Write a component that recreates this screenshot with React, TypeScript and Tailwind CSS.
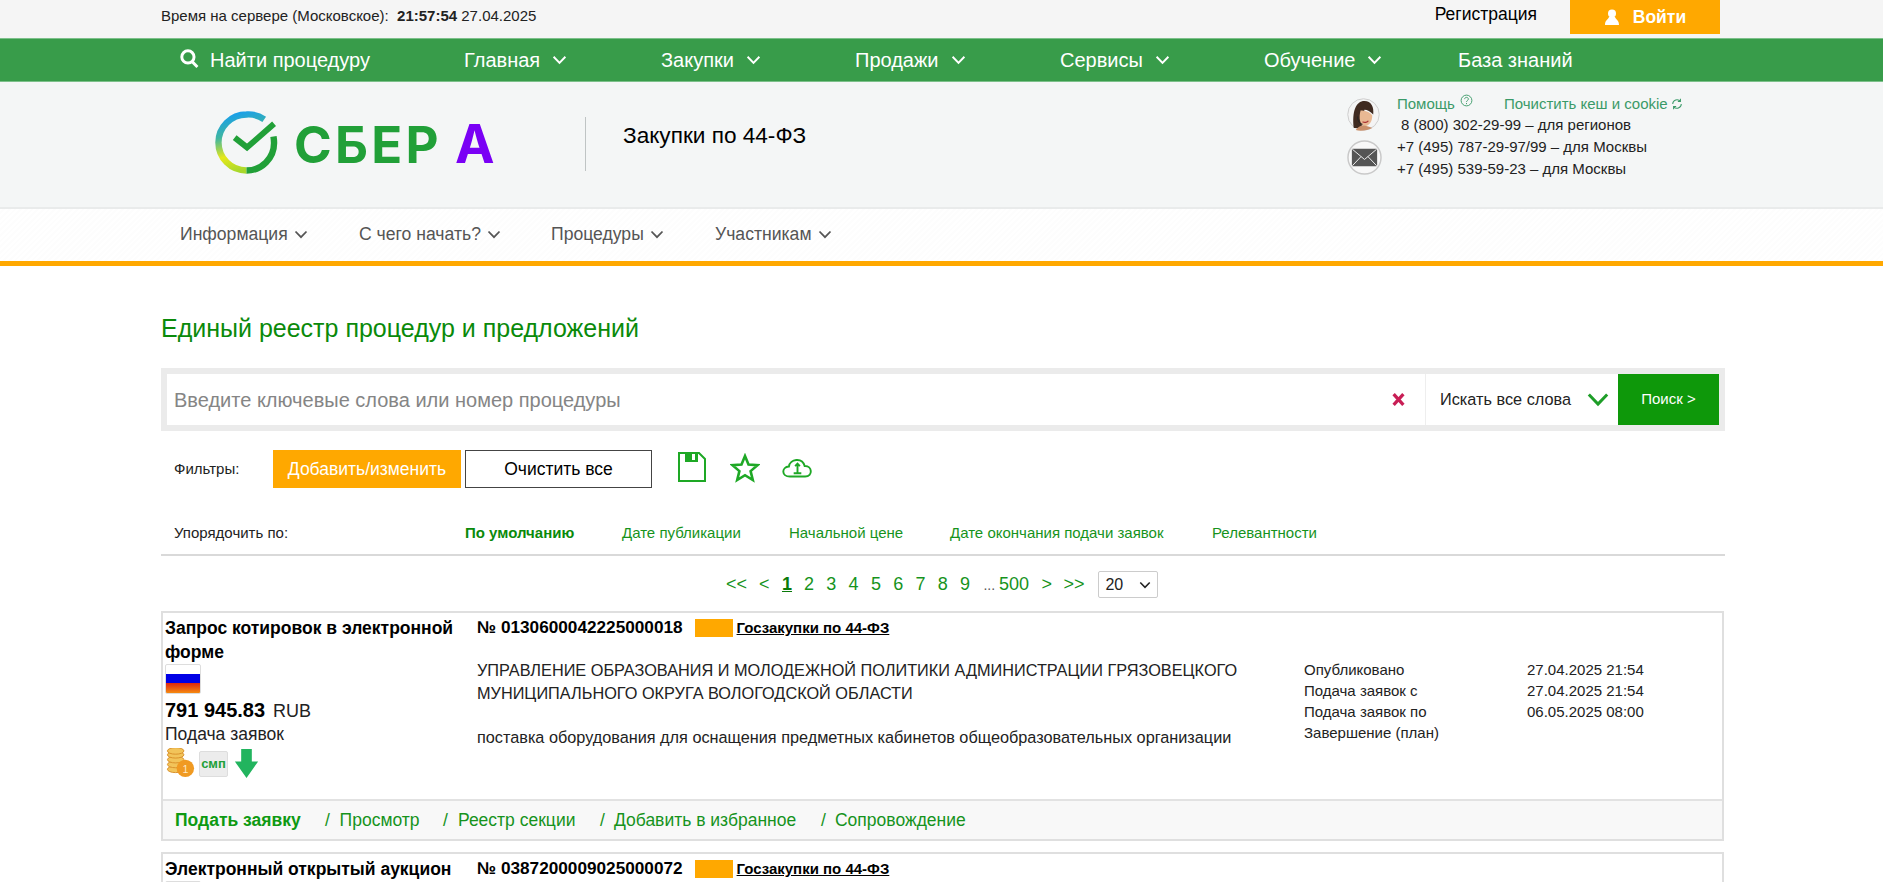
import React from "react";

const Chev = ({ cls = "" }: { cls?: string }) => (
  <svg viewBox="0 0 14 9" className={cls} fill="none" stroke="currentColor" strokeWidth="1.8">
    <path d="M1.5 1.5 7 7.2l5.5-5.7" />
  </svg>
);

const NavItem = ({ w, label, chev = true }: { w: string; label: string; chev?: boolean }) => (
  <div className={`${w} flex items-center`}>
    <span>{label}</span>
    {chev && <Chev cls="ml-[12px] w-[15px] h-[10px]" />}
  </div>
);

const SubItem = ({ w, label }: { w: string; label: string }) => (
  <div className={`${w} flex items-center`}>
    <span>{label}</span>
    <Chev cls="ml-[6px] w-[14px] h-[9px]" />
  </div>
);

const Logo = () => (
  <div className="flex items-center ml-[215px] w-[370px] h-full" style={{ fontFamily: "Inter, sans-serif" }}>
    <svg viewBox="0 0 64 64" className="w-[63px] h-[63px] shrink-0 mt-[-4px]">
      <defs>
        <linearGradient id="ring" x1="0.3" y1="0" x2="0.5" y2="1">
          <stop offset="0" stopColor="#1aa0e8" />
          <stop offset="0.35" stopColor="#3fb6a0" />
          <stop offset="0.7" stopColor="#e6e81a" />
          <stop offset="1" stopColor="#a8d82c" />
        </linearGradient>
      </defs>
      <path d="M50 8.500A28 28 0 0 0 32 3.500 28 28 0 0 0 32 60.500" fill="none" stroke="url(#ring)" strokeWidth="6.500" />
      <path d="M32 60.500A28 28 0 0 0 60 32.500c0-2-.2-4-.6-6.500" fill="none" stroke="#21a038" strokeWidth="6.500" />
      <path d="M20 27l12.500 10L60 13" fill="none" stroke="#21a038" strokeWidth="6" />
    </svg>
    <span className="ml-[16px] text-[#21a038] font-bold text-[51px] leading-none tracking-[3.300px]">СБЕР</span>
    <span className="ml-[13px] text-[#7a00f5] font-bold text-[53px] leading-none">А</span>
  </div>
);

const Avatar = () => (
  <svg viewBox="0 0 34 34" className="w-[33px] h-[33px]">
    <circle cx="17" cy="17" r="16.200" fill="#f4f4f4" stroke="#ccc" />
    <path d="M7 31C5 14 9 3 18 3c7 0 10 6 9 14-3-3-6-5-9-5-2 6-2 12-3 19z" fill="#3f2a20" />
    <path d="M14 13c4 0 9 1 12 5 0 6-3 11-8 11-5-1-6-9-4-16z" fill="#e9b893" />
    <path d="M9 33c2-3 4-4 7-5 3 1 7 1 10 3-4 2-12 4-17 2z" fill="#c98f6a" />
    <path d="M16 24.500c2 1.200 5 .8 6-1" fill="none" stroke="#a33" strokeWidth="1.200" />
    <path d="M11 19c0 4 1 7 5 8" fill="none" stroke="#222" strokeWidth="1" />
  </svg>
);

const Mail = () => (
  <svg viewBox="0 0 36 36" className="w-[35px] h-[35px]">
    <circle cx="18" cy="18" r="17" fill="#f8f8f8" stroke="#c9c9c9" strokeWidth="1.500" />
    <rect x="5" y="9" width="26" height="18" rx="1" fill="#555" />
    <path d="M5.500 9.500 18 20 30.500 9.500M5.500 26.500l9-9.500M30.500 26.500l-9-9.500" fill="none" stroke="#eee" strokeWidth="1" />
  </svg>
);

const Flag = () => (
  <div className="w-[36px] h-[30px] rounded-[2px] border border-[#ddd] bg-[linear-gradient(#ffffff_0_33%,#0000e6_33%_66%,#e02a10_66%,#f58a10_100%)]" />
);

const Coins = () => (
  <svg viewBox="0 0 32 32" className="w-[31px] h-[31px]">
    {[22, 17, 12, 7, 3].map((y) => (
      <ellipse key={y} cx="11" cy={y} rx="8.500" ry="3.400" fill="#f2c45a" stroke="#d9912a" strokeWidth="1" />
    ))}
    <circle cx="21" cy="21" r="9" fill="#f09a22" />
    <text x="21" y="25.500" textAnchor="middle" fontSize="11" fill="#ffe9c4" fontFamily="Liberation Sans, sans-serif">1</text>
  </svg>
);

const Arrow = () => (
  <svg viewBox="0 0 24 30" className="w-[25px] h-[29px]">
    <path d="M6.500 0h11v13H24L12 30 0 13h6.500z" fill="#22b45e" />
  </svg>
);

const NumRow = ({ num }: { num: string }) => (
  <div className="flex items-center h-[24px] text-black">
    <span className="font-bold text-[17.200px]">№ {num}</span>
    <span className="ml-[12px] w-[38px] h-[18px] bg-[#ffa800]" />
    <span className="ml-[4px] font-bold text-[15px] underline">Госзакупки по 44-ФЗ</span>
  </div>
);

const Dates = () => (
  <div className="text-[15px] leading-[21px] text-[#222]">
    {[
      ["Опубликовано", "27.04.2025 21:54"],
      ["Подача заявок с", "27.04.2025 21:54"],
      ["Подача заявок по", "06.05.2025 08:00"],
      ["Завершение (план)", ""],
    ].map(([a, b]) => (
      <div key={a} className="flex">
        <span className="w-[223px]">{a}</span>
        <span>{b}</span>
      </div>
    ))}
  </div>
);

export default function App() {
  return (
    <div className="w-[1883px] h-[882px] overflow-hidden bg-white" style={{ fontFamily: "'Liberation Sans', Arial, sans-serif" }}>
      {/* top bar */}
      <div className="h-[38px] bg-[#f5f5f5] flex items-start text-[#222]">
        <div className="ml-[161px] mt-[7px] text-[15px] leading-[18px]">
          Время на сервере (Московское):&nbsp; <b>21:57:54</b> 27.04.2025
        </div>
        <div className="ml-auto flex mr-[163px]">
          <span className="text-[17.500px] leading-[28px] text-black mr-[33px]">Регистрация</span>
          <div className="w-[150px] h-[34px] bg-[#ffa800] text-white flex items-center justify-center font-bold text-[17.500px]">
            <svg viewBox="0 0 16 16" className="w-[16px] h-[16px] mr-[13px]" fill="#fff">
              <circle cx="8" cy="4.500" r="4" />
              <path d="M5 8c-1 3-4 3-4 8h14c0-5-3-5-4-8z" />
            </svg>
            Войти
          </div>
        </div>
      </div>

      {/* green nav */}
      <div className="h-[44px] bg-[#389c4a] border-y border-[#7cc08a] text-white text-[20px] flex items-center pl-[180px]">
        <div className="w-[284px] flex items-center">
          <svg viewBox="0 0 18 18" className="w-[19px] h-[19px] mr-[11px] mt-[-4px]" fill="none" stroke="#fff" strokeWidth="2.800">
            <circle cx="7.500" cy="7.500" r="5.800" />
            <path d="M11.500 12 16.500 17" />
          </svg>
          Найти процедуру
        </div>
        <NavItem w="w-[197px]" label="Главная" />
        <NavItem w="w-[194px]" label="Закупки" />
        <NavItem w="w-[205px]" label="Продажи" />
        <NavItem w="w-[204px]" label="Сервисы" />
        <NavItem w="w-[194px]" label="Обучение" />
        <NavItem w="w-[120px]" label="База знаний" chev={false} />
      </div>

      {/* header */}
      <div className="h-[127px] bg-[#f4f6f6] flex items-center border-b-2 border-[#e9ebeb]">
        <Logo />
        <div className="w-px h-[54px] bg-[#bfc4c4] mt-[-2px]" />
        <div className="ml-[37px] text-[22.600px] text-black mt-[-18px]">Закупки по 44-ФЗ</div>
        <div className="ml-auto mr-[166px] flex self-start pt-[16px]">
          <div className="flex flex-col gap-[9px] mr-[15px] shrink-0">
            <Avatar />
            <Mail />
          </div>
          <div className="text-[15px] leading-[21px] text-[#222] w-[320px] mt-[-5px]">
            <div className="flex text-[#3a9a68]">
              <span>Помощь</span>
              <svg viewBox="0 0 14 14" className="w-[13px] h-[13px] ml-[5px] mt-[1px]" fill="none" stroke="currentColor">
                <circle cx="7" cy="7" r="5.800" />
                <path d="M5 5.500c0-2.500 4-2.500 4 0 0 1.500-2 1.500-2 3M7 9.700v1.200" />
              </svg>
              <span className="ml-[31px]">Почистить кеш и cookie</span>
              <svg viewBox="0 0 14 14" className="w-[12px] h-[12px] ml-[3px] mt-[5px]" fill="none" stroke="currentColor" strokeWidth="1.200">
                <path d="M2 7a5 5 0 0 1 9-3M12 7a5 5 0 0 1-9 3M11 1v3H8M3 13v-3h3" />
              </svg>
            </div>
            <div className="pl-[4px]">8 (800) 302-29-99 – для регионов</div>
            <div className="mt-[1px] leading-[22px]">+7 (495) 787-29-97/99 – для Москвы</div>
            <div className="leading-[22px]">+7 (495) 539-59-23 – для Москвы</div>
          </div>
        </div>
      </div>

      {/* sub nav */}
      <div className="h-[52px] bg-[repeating-linear-gradient(135deg,#ffffff_0,#ffffff_2px,#fdfdfd_2px,#fdfdfd_4px)] flex items-center pl-[180px] pb-[1px] text-[17.600px] text-[#555]">
        <SubItem w="w-[179px]" label="Информация" />
        <SubItem w="w-[192px]" label="С чего начать?" />
        <SubItem w="w-[164px]" label="Процедуры" />
        <SubItem w="w-[140px]" label="Участникам" />
      </div>
      <div className="h-[5px] bg-[#ffa800]" />

      {/* content */}
      <div className="ml-[161px] w-[1564px]">
        <h1 className="mt-[47px] text-[25px] leading-[30px] text-[#0a8a0a]">Единый реестр процедур и предложений</h1>

        {/* search */}
        <div className="mt-[25px] h-[63px] bg-[#ebebeb] p-[6px] flex">
          <div className="flex-1 bg-white flex items-center">
            <span className="ml-[7px] text-[20px] text-[#858585]">Введите ключевые слова или номер процедуры</span>
            <span className="ml-auto mr-[20px] leading-none">
              <svg viewBox="0 0 12 12" className="w-[13px] h-[13px]" fill="none" stroke="#c81e55" strokeWidth="3">
                <path d="M1.500 1 10.500 11M10.500 1 1.500 11" />
              </svg>
            </span>
            <div className="w-[193px] h-full border-l border-[#eee] flex items-center pl-[14px] text-[16.300px] text-[#222]">
              Искать все слова
              <Chev cls="ml-[15px] w-[24px] h-[15px] text-[#1e9e28]" />
            </div>
          </div>
          <div className="w-[101px] h-[51px] bg-[#0e980a] text-white text-[15px] flex items-center justify-center">Поиск &gt;</div>
        </div>

        {/* filters */}
        <div className="mt-[19px] h-[38px] flex items-center">
          <span className="ml-[13px] w-[99px] text-[15px] text-[#222]">Фильтры:</span>
          <div className="w-[188px] h-[38px] bg-[#ffa800] text-white text-[17.500px] flex items-center justify-center">Добавить/изменить</div>
          <div className="ml-[4px] w-[187px] h-[38px] border border-[#444] text-black text-[17.500px] flex items-center justify-center">Очистить все</div>
          <svg viewBox="0 0 28 30" className="ml-[26px] w-[28px] h-[30px] mt-[-4px]" fill="none" stroke="#1ea825" strokeWidth="2">
            <path d="M1 1h20l6 6v22H1z" />
            <rect x="7" y="1" width="13" height="9" fill="#1ea825" stroke="none" />
            <rect x="14" y="2" width="3" height="6" fill="#fff" stroke="none" />
          </svg>
          <svg viewBox="0 0 30 30" className="ml-[24px] w-[30px] h-[30px] mt-[-2px]" fill="none" stroke="#1ea825" strokeWidth="2.600">
            <path d="M15 3l3.500 8.500 9 .7-6.900 5.900 2.200 8.900L15 22.200 7.200 27l2.200-8.900L2.500 12.200l9-.7z" />
          </svg>
          <svg viewBox="0 0 32 22" className="ml-[22px] w-[31px] h-[21px] mt-[-4px]" fill="none" stroke="#1ea825" strokeWidth="2">
            <path d="M8 20.500c-9 0-9-10-1-10.500C8 2 21 0 23.500 9.500c8-.5 9 11 .5 11z" />
            <path d="M16 17V7M13.500 9.500 16 7l2.500 2.500M12 17h8" />
          </svg>
        </div>

        {/* sort */}
        <div className="mt-[35px] h-[33px] border-b-2 border-[#d9d9d9] flex items-start text-[15px] leading-[20px] text-[#16931c]">
          <span className="ml-[13px] w-[291px] text-[#222]">Упорядочить по:</span>
          <b className="w-[157px] text-[#0a8a0a]">По умолчанию</b>
          <span className="w-[167px]">Дате публикации</span>
          <span className="w-[161px]">Начальной цене</span>
          <span className="w-[262px]">Дате окончания подачи заявок</span>
          <span>Релевантности</span>
        </div>

        {/* pagination */}
        <div className="mt-[15px] h-[27px] flex items-center text-[18px] text-[#16931c]">
          <span className="ml-[565px] w-[33px]">&lt;&lt;</span>
          <span className="w-[23px]">&lt;</span>
          <b className="w-[22px] underline text-[#0a7a0a]">1</b>
          {["2", "3", "4", "5", "6", "7", "8", "9"].map((n) => (
            <span key={n} className="w-[22.300px]">{n}</span>
          ))}
          <span className="ml-[1px] w-[58px]"><span className="text-[14px] text-[#555]">... </span>500</span>
          <span className="w-[22px]">&gt;</span>
          <span className="w-[35px]">&gt;&gt;</span>
          <div className="w-[60px] h-[27px] border border-[#ccc] rounded-[2px] flex items-center pl-[6px] text-[#222] text-[16px]">
            20
            <Chev cls="ml-auto mr-[6px] w-[12px] h-[8px] text-[#222]" />
          </div>
        </div>

        {/* card 1 */}
        <div className="mt-[13px] w-[1563px] border-2 border-[#dfdfdf] h-[230px] flex flex-col">
          <div className="flex-1 pt-[3px]">
            <div className="flex">
              <div className="w-[314px] pl-[2px]">
                <div className="font-bold text-[17.500px] leading-[24px] text-black w-[300px]">Запрос котировок в электронной форме</div>
                <Flag />
                <div className="mt-[3px] text-[20px] leading-[26px] text-black flex items-baseline">
                  <b>791 945.83</b>
                  <span className="ml-[8px] text-[18px] text-[#222]">RUB</span>
                </div>
                <div className="text-[17.500px] leading-[21px] text-[#222]">Подача заявок</div>
                <div className="flex items-center mt-[3px]">
                  <Coins />
                  <div className="ml-[3px] w-[29px] h-[26px] bg-[#ececec] rounded-[2px] border border-[#ddd] flex items-center justify-center text-[#21a038] font-bold text-[13px] leading-none">смп</div>
                  <div className="ml-[6px]"><Arrow /></div>
                </div>
              </div>
              <div className="w-[827px]">
                <NumRow num="0130600042225000018" />
                <div className="mt-[19px] text-[16.300px] leading-[23px] text-[#222]">
                  УПРАВЛЕНИЕ ОБРАЗОВАНИЯ И МОЛОДЕЖНОЙ ПОЛИТИКИ АДМИНИСТРАЦИИ ГРЯЗОВЕЦКОГО<br />
                  МУНИЦИПАЛЬНОГО ОКРУГА ВОЛОГОДСКОЙ ОБЛАСТИ
                </div>
                <div className="mt-[21px] text-[16.250px] leading-[22px] text-[#222]">
                  поставка оборудования для оснащения предметных кабинетов общеобразовательных организации
                </div>
              </div>
              <div className="mt-[43px]"><Dates /></div>
            </div>
          </div>
          <div className="h-[40px] bg-[#f8f8f8] border-t-2 border-[#e2e2e2] flex items-center pl-[12px] text-[17.500px] text-[#16931c]">
            <b className="w-[150px] text-[#0e9a12]">Подать заявку</b>
            <span className="w-[14.600px]">/</span>
            <span className="w-[103.400px]">Просмотр</span>
            <span className="w-[15px]">/</span>
            <span className="w-[142px]">Реестр секции</span>
            <span className="w-[14px]">/</span>
            <span className="w-[207px]">Добавить в избранное</span>
            <span className="w-[14px]">/</span>
            <span>Сопровождение</span>
          </div>
        </div>

        {/* card 2 */}
        <div className="mt-[11px] w-[1563px] border-2 border-[#dfdfdf] h-[120px] pt-[3px]">
          <div className="flex">
            <div className="w-[314px] pl-[2px] font-bold text-[17.500px] leading-[24px] text-black">Электронный открытый аукцион</div>
            <NumRow num="0387200009025000072" />
          </div>
          <div className="pl-[2px]"><Flag /></div>
        </div>
      </div>
    </div>
  );
}
